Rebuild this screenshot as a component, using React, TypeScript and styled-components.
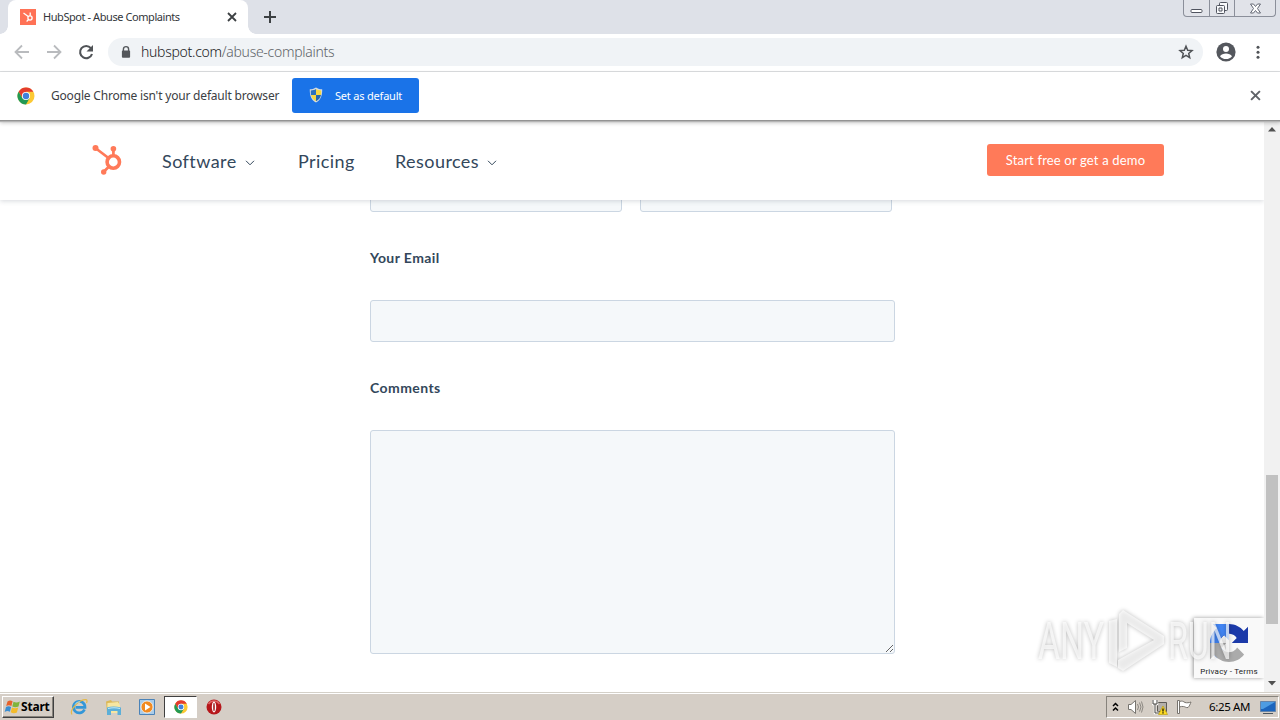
import React from "react";
import styled, { createGlobalStyle } from "styled-components";

const GlobalStyle = createGlobalStyle`
  * {
    box-sizing: border-box;
  }

  body {
    margin: 0;
    overflow: hidden;
    background: #fff;
  }

  svg {
    display: block;
    flex: none;
  }
`;

const Screen = styled.div`
  position: relative;
  display: flex;
  flex-direction: column;
  width: 1280px;
  height: 720px;
  overflow: hidden;
  font-family: "Noto Sans", "Open Sans", sans-serif;
`;

/* ---------- tabs ---------- */

const TabStrip = styled.div`
  display: flex;
  align-items: flex-start;
  height: 34px;
  padding-left: 8px;
  background: #dee1e8;
`;

const Tab = styled.div`
  position: relative;
  display: flex;
  align-items: center;
  width: 240px;
  height: 34px;
  padding: 0 11px 0 12px;
  border-radius: 8px 8px 0 0;
  background: #fff;

  &::before,
  &::after {
    content: "";
    position: absolute;
    bottom: 0;
    width: 8px;
    height: 8px;
  }

  &::before {
    left: -8px;
    background: radial-gradient(circle at 0 0, transparent 7.5px, #fff 8px);
  }

  &::after {
    right: -8px;
    background: radial-gradient(circle at 100% 0, transparent 7.5px, #fff 8px);
  }
`;

const TabTitle = styled.span`
  flex: 1;
  margin-left: 7px;
  color: #33363a;
  font-size: 11px;
  line-height: 16px;
  letter-spacing: -0.43px;
  white-space: nowrap;
`;

const NewTab = styled.div`
  margin: 11px 0 0 16px;
`;

const WindowButtons = styled.div`
  display: flex;
  width: 93px;
  height: 17px;
  margin: 0 4px 0 auto;
  border: 1px solid #8b8f9a;
  border-top: none;
  border-radius: 0 0 4px 4px;
  background: #e1e3e9;
`;

const WindowButton = styled.div<{ $width: number }>`
  display: flex;
  align-items: flex-end;
  justify-content: center;
  width: ${({ $width }) => $width}px;
  padding-bottom: 1px;

  & + & {
    border-left: 1px solid #8b8f9a;
  }
`;

/* ---------- toolbar ---------- */

const Toolbar = styled.div`
  display: flex;
  align-items: center;
  height: 38px;
  padding: 0 12px 1px 14px;
  border-bottom: 1px solid #dcdee0;
  background: #fff;
`;

const NavIcons = styled.div`
  display: flex;
  gap: 16px;
`;

const AddressBar = styled.div`
  display: flex;
  align-items: center;
  width: 1095px;
  height: 28px;
  margin-left: 14px;
  padding: 0 9px 0 11px;
  border-radius: 14px;
  background: #f0f3f6;
`;

const Url = styled.span`
  flex: 1;
  margin-left: 8px;
  color: #5f6368;
  font-size: 14px;
  font-weight: 300;
  letter-spacing: -0.29px;
  line-height: 20px;

  b {
    color: #202124;
    font-weight: inherit;
  }
`;

const ToolbarEnd = styled.div`
  display: flex;
  align-items: center;
  gap: 12px;
  margin-left: 13px;
`;

/* ---------- default browser bar ---------- */

const InfoBar = styled.div`
  position: relative;
  z-index: 3;
  display: flex;
  align-items: center;
  height: 49px;
  padding: 0 19px 2px 17px;
  background: #fff;
  box-shadow: inset 0 -1px #939393, 0 1px 1px #b5b5b5, 0 2px 4px rgba(0, 0, 0, 0.22);
`;

const InfoText = styled.span`
  margin-left: 16px;
  width: 241px;
  color: #3c4043;
  font-size: 12px;
  letter-spacing: -0.19px;
  white-space: nowrap;
`;

const DefaultButton = styled.button`
  display: flex;
  align-items: center;
  width: 127px;
  height: 35px;
  margin-right: auto;
  padding: 0 0 1px 16px;
  gap: 11px;
  border: none;
  border-radius: 3px;
  background: #1a73e8;
  color: #fff;
  font: 11px "Noto Sans", sans-serif;
  letter-spacing: -0.2px;
  white-space: nowrap;
`;

/* ---------- page ---------- */

const Viewport = styled.div`
  display: flex;
  height: 571px;
`;

const Page = styled.main`
  width: 1264px;
  overflow: hidden;
  background: #fff;
  color: #33475b;
  font-family: Lato, sans-serif;
`;

const SiteHeader = styled.header`
  position: relative;
  z-index: 2;
  display: flex;
  align-items: center;
  height: 79px;
  padding: 0 100px 0 91px;
  background: #fff;
  box-shadow: 0 1px 5px rgba(45, 62, 80, 0.2);
`;

const SiteNav = styled.nav`
  display: flex;
  margin-left: 38px;
`;

const NavLink = styled.a<{ $width: number }>`
  display: flex;
  align-items: center;
  gap: 9px;
  width: ${({ $width }) => $width}px;
  font-size: 18px;
  line-height: 24px;
  letter-spacing: 0.43px;

  svg {
    margin: 5px 0 0 -1px;
  }
`;

const DemoButton = styled.button`
  width: 177px;
  height: 32px;
  margin: 0 0 1px auto;
  padding: 0;
  border: none;
  border-radius: 3px;
  background: #ff7a59;
  color: #fff;
  font: 13px Lato, sans-serif;
  letter-spacing: 0.17px;
`;

const Form = styled.form`
  display: flex;
  flex-direction: column;
  width: 525px;
  margin: -30px 0 0 370px;
`;

const FieldRow = styled.div`
  display: flex;
  gap: 18px;
`;

const Input = styled.input`
  width: 100%;
  height: 42px;
  border: 1px solid #cbd6e2;
  border-radius: 3px;
  outline: none;
  background: #f5f8fa;

  ${FieldRow} & {
    width: 252px;
  }
`;

const Label = styled.label`
  margin: 37px 0 33px;
  font-size: 14px;
  font-weight: 700;
  line-height: 18px;
  letter-spacing: 0.42px;
`;

const TextArea = styled.textarea`
  width: 100%;
  height: 224px;
  border: 1px solid #cbd6e2;
  border-radius: 3px;
  outline: none;
  resize: vertical;
  background: #f5f8fa;
`;

const Scrollbar = styled.div`
  display: flex;
  flex-direction: column;
  align-items: center;
  width: 16px;
  padding: 6px 0;
  background: #f1f1f1;
`;

const ScrollThumb = styled.div`
  width: 12px;
  height: 149px;
  margin: 343px 0 auto;
  background: #c1c1c1;
`;

/* ---------- overlays ---------- */

const Recaptcha = styled.div`
  position: absolute;
  top: 618px;
  left: 1194px;
  z-index: 1;
  display: flex;
  flex-direction: column;
  align-items: center;
  width: 70px;
  height: 60px;
  padding-top: 6px;
  background: #f9f9f9;
  box-shadow: -1px 0 4px #999;
  clip-path: inset(-6px 0 -6px -6px);
  color: #222;
  font: 8px Roboto, sans-serif;
  letter-spacing: 0.22px;
  white-space: nowrap;
`;

const RecaptchaLinks = styled.span`
  margin-top: 5px;
`;

const Watermark = styled.svg`
  position: absolute;
  top: 602px;
  left: 1028px;
  z-index: 4;
  filter: drop-shadow(0 0 2px rgba(0, 0, 0, 0.38));
`;

/* ---------- taskbar ---------- */

const Taskbar = styled.footer`
  position: relative;
  z-index: 3;
  display: flex;
  align-items: center;
  height: 28px;
  padding: 1px 1px 0 2px;
  border-top: 1px solid #d4d0c8;
  background: #d5cec6;
  box-shadow: inset 0 1px #fff;
`;

const StartButton = styled.button`
  display: flex;
  align-items: center;
  gap: 0;
  width: 52px;
  height: 22px;
  padding: 0 0 1px 1px;
  border: 1px solid;
  border-color: #fff #404040 #404040 #fff;
  background: #d5cec6;
  box-shadow: inset -1px -1px #87837c;
  color: #000;
  font: bold 12px "Noto Sans", sans-serif;
  letter-spacing: -0.2px;
`;

const QuickLaunch = styled.div`
  display: flex;
  align-items: center;
  margin-left: 8px;
`;

const TaskItem = styled.div<{ $active?: boolean }>`
  display: flex;
  align-items: center;
  justify-content: center;
  width: ${({ $active }) => ($active ? 33 : 34)}px;
  height: 22px;
  border: 1px solid;
  border-color: ${({ $active }) => ($active ? "#404040 #fff #fff #404040" : "transparent")};
  background: ${({ $active }) => ($active ? "#fff" : "none")};
`;

const Tray = styled.div`
  display: flex;
  align-items: center;
  width: 173px;
  height: 22px;
  margin-left: auto;
  padding-left: 5px;
  border: 1px solid;
  border-color: #87837c #fff #fff #87837c;
`;

const TrayIcons = styled.div`
  display: flex;
  align-items: center;
  gap: 8px;
`;

const Clock = styled.span`
  width: 51px;
  margin: -2px 0 0 16px;
  color: #000;
  font-size: 11.5px;
  letter-spacing: -0.35px;
  white-space: nowrap;
`;

/* ---------- icons ---------- */

const Sprocket = ({ size, color }: { size: number; color: string }) => (
  <svg width={size} height={size} viewBox="0 0 33 33" fill="none" stroke={color}>
    <circle cx="22.3" cy="18" r="6.2" strokeWidth="3.6" />
    <path d="M5 4.500 17.500 14M22.400 5v7M17.800 22.700 13.500 27" strokeWidth="2.700" />
    <g fill={color} stroke="none">
      <circle cx="4.500" cy="4" r="3" />
      <circle cx="22.400" cy="4.800" r="2.800" />
      <circle cx="12.700" cy="28" r="2.700" />
    </g>
  </svg>
);

const Favicon = () => (
  <svg width="16" height="16" viewBox="0 0 16 16">
    <path fill="#ff7256" d="M0 0h16v16H0z" />
    <g fill="none" stroke="#fff" strokeWidth="1.3">
      <circle cx="10" cy="9" r="2.100" />
      <path d="M3.500 4 8.200 7.500M10.200 3.500v3.200M8.400 10.800l-1.800 1.700" />
    </g>
  </svg>
);

const Cross = ({ size, color = "#5f6368" }: { size: number; color?: string }) => (
  <svg width={size} height={size} viewBox="0 0 10 10" stroke={color} strokeWidth="1.800">
    <path d="m1 1 8 8M9 1 1 9" />
  </svg>
);

const Plus = () => (
  <svg width="12" height="12" viewBox="0 0 12 12" stroke="#3c4043" strokeWidth="2">
    <path d="M6 0v12M0 6h12" />
  </svg>
);

const Arrow = ({ flipped }: { flipped?: boolean }) => (
  <svg width="16" height="16" viewBox="0 0 16 16" fill="none" stroke="#b9bbbe" strokeWidth="1.800">
    <path d={flipped ? "M1 8h13M8 1.500 14.500 8 8 14.500" : "M15 8H2M8 1.500 1.500 8 8 14.500"} />
  </svg>
);

const Reload = () => (
  <svg width="16" height="16" viewBox="0 0 16 16">
    <path d="M12.900 4.200A6.100 6.100 0 1 0 14 10" fill="none" stroke="#505357" strokeWidth="2.100" />
    <path d="M15 1v6.500H8.500z" fill="#505357" />
  </svg>
);

const Lock = () => (
  <svg width="14" height="14" viewBox="0 0 14 14">
    <path d="M4.400 6V4.200a2.600 2.600 0 0 1 5.200 0V6" fill="none" stroke="#54575b" strokeWidth="1.400" />
    <rect x="2.900" y="5.400" width="8.200" height="7.400" rx="1" fill="#54575b" />
  </svg>
);

const Star = () => (
  <svg width="16" height="16" viewBox="0 0 16 16" fill="none" stroke="#505357" strokeWidth="1.500">
    <path d="m8 2.200 1.700 4 4.300.4-3.300 2.800 1 4.200L8 11.400l-3.700 2.200 1-4.200L2 6.600l4.300-.4z" />
  </svg>
);

const Avatar = () => (
  <svg width="20" height="20" viewBox="0 0 20 20">
    <circle cx="10" cy="10" r="9.600" fill="#54575d" />
    <circle cx="10" cy="6.900" r="3" fill="#fff" />
    <path d="M4 14.200c1.200-2 3.500-2.800 6-2.800s4.800.8 6 2.800c-1.300 1.800-3.500 2.900-6 2.900s-4.700-1.100-6-2.900z" fill="#fff" />
  </svg>
);

const Dots = () => (
  <svg width="20" height="16" viewBox="0 0 20 16" fill="#505357">
    <circle cx="10" cy="3.200" r="1.500" />
    <circle cx="10" cy="8.200" r="1.500" />
    <circle cx="10" cy="13.200" r="1.500" />
  </svg>
);

const ChromeLogo = ({ size }: { size: number }) => (
  <svg width={size} height={size} viewBox="0 0 18 18">
    <circle cx="9" cy="9" r="8.500" fill="#fcc934" />
    <path d="M1.600 4.750A8.500 8.500 0 0 1 16.400 4.750H9L5.300 11.100z" fill="#e33b2e" />
    <path d="M1.600 4.750A8.500 8.500 0 0 0 9 17.500l3.700-6.400H5.300z" fill="#229954" />
    <circle cx="9" cy="9" r="4.100" fill="#fff" />
    <circle cx="9" cy="9" r="3.200" fill="#3f80dc" />
  </svg>
);

const Shield = () => (
  <svg width="16" height="16" viewBox="0 0 16 16">
    <path d="M8 .5c2 1.300 4 1.800 6.200 1.800C14.400 8 13 13 8 15.500 3 13 1.600 8 1.800 2.300 4 2.300 6 1.800 8 .5z" fill="#d5dce2" />
    <path d="M8 2v6H3C2.800 6.500 2.700 5 2.800 3.400 4.700 3.400 6.500 3 8 2z" fill="#2a71bd" />
    <path d="M8 2v6h5c.2-1.500.3-3 .2-4.600C11.300 3.400 9.500 3 8 2zM8 8v6.300C5.200 12.900 3.700 10.800 3 8z" fill="#f5d742" />
    <path d="M8 8v6.300c2.800-1.400 4.300-3.500 5-6.300z" fill="#2467ad" />
  </svg>
);

const Chevron = () => (
  <svg width="10" height="6" viewBox="0 0 10 6" fill="none" stroke="#33475b">
    <path d="m1 .8 4 4 4-4" />
  </svg>
);

const ScrollArrow = ({ down }: { down?: boolean }) => (
  <svg width="8" height="5" viewBox="0 0 8 5" fill="#505050">
    <path d={down ? "M0 0h8L4 4.500z" : "M0 4.500h8L4 0z"} />
  </svg>
);

const RecaptchaLogo = () => (
  <svg width="38" height="38" viewBox="0 0 64 64">
    <path
      d="M64 31.955l-.033-1.370V4.687l-7.160 7.160C50.948 4.674 42.033.093 32.050.093c-10.400 0-19.622 4.960-25.458 12.640l11.736 11.860a15.550 15.550 0 0 1 4.754-5.334c2.050-1.600 4.952-2.906 8.968-2.906.485 0 .860.057 1.135.163 4.976.393 9.288 3.140 11.828 7.124l-8.307 8.307z"
      fill="#1c3aa9"
    />
    <path
      d="M31.862.094l-1.370.033H4.594l7.160 7.160C4.580 13.147 0 22.060 0 32.046c0 10.400 4.960 19.622 12.640 25.458L24.500 45.768a15.550 15.550 0 0 1-5.334-4.754c-1.600-2.050-2.906-4.952-2.906-8.968 0-.485.057-.860.163-1.135.393-4.976 3.140-9.288 7.124-11.828l8.307 8.307z"
      fill="#4285f4"
    />
    <path
      d="M.001 32.045l.033 1.370v25.898l7.160-7.160c5.860 7.173 14.774 11.754 24.760 11.754 10.400 0 19.622-4.960 25.458-12.640l-11.736-11.860a15.550 15.550 0 0 1-4.754 5.334c-2.050 1.600-4.952 2.906-8.968 2.906-.485 0-.860-.057-1.135-.163-4.976-.393-9.288-3.140-11.828-7.124l8.307-8.307z"
      fill="#ababab"
    />
  </svg>
);

const WindowsFlag = () => (
  <svg width="17" height="16" viewBox="0 0 17 16">
    <path d="M3.500 2.500C5.500 1 7 1.300 8.600 2.200L7.400 7C5.800 6 4 6 2.200 7z" fill="#e7622b" />
    <path d="M9.500 2.700c2 1.100 4 1 6.300-.2l-1.300 5c-2.200 1-4.200 1-6.200 0z" fill="#7fb43b" />
    <path d="M2 8c1.700-1 3.500-1 5.100 0l-1.200 4.800c-1.700-1-3.400-1-5.200.1z" fill="#3a8ed2" />
    <path d="M8 8.500c2 1 4 1 6.200 0l-1.300 5c-2.200 1-4.200.9-6.200-.2z" fill="#f3bb2b" />
  </svg>
);

const InternetExplorer = () => (
  <svg width="18" height="18" viewBox="0 0 18 18" fill="none">
    <path d="M14.500 11.500A5.800 5.800 0 1 1 15 9.300H5.500" stroke="#3397d8" strokeWidth="2.700" />
    <path d="M2 16.500C-1 12 9 1.500 16 1.700c1.400.2 1.200 2 .5 3.300" stroke="#e5b946" strokeWidth="1.200" />
    <path d="M5 6.500C6 4.500 8 3.800 10 4" stroke="#a4daf5" />
  </svg>
);

const Explorer = () => (
  <svg width="17" height="17" viewBox="0 0 17 17">
    <path d="M1 2.500 6 1l1 1.500h7V14H2z" fill="#dcb857" />
    <path d="M2.500 4 13 3l2 3v8H2z" fill="#f7e6a1" />
    <path d="M2 8.500c4-1.300 9-1.300 14 0V16h-3.500v-4H6v4H2z" fill="#5cafd8" />
    <path d="M3 9.500c4-1 8-1 12 0" stroke="#c4eafa" fill="none" />
  </svg>
);

const MediaPlayer = () => (
  <svg width="16" height="16" viewBox="0 0 16 16">
    <path d="M.5.500h15v15H.5z" fill="#a9cce9" stroke="#4b83b8" />
    <circle cx="8" cy="8" r="6" fill="#f18a20" stroke="#fff" strokeWidth=".7" />
    <path d="m6 4.500 5.500 3.500L6 11.500z" fill="#fff" />
  </svg>
);

const Opera = () => (
  <svg width="16" height="16" viewBox="0 0 16 16">
    <circle cx="8" cy="8" r="7.500" fill="#b6171b" />
    <path d="M2.500 5a6.500 6.500 0 0 1 11 0" stroke="#df6565" strokeWidth="1.500" fill="none" />
    <ellipse cx="8" cy="8" rx="2.200" ry="5.400" fill="#fff" />
    <ellipse cx="8" cy="8" rx=".8" ry="4.300" fill="#9d1115" />
  </svg>
);

const TrayChevron = () => (
  <svg width="7" height="10" viewBox="0 0 7 10" fill="none" stroke="#000" strokeWidth="1.500">
    <path d="m1 4 2.500-2.500L6 4M1 8.500 3.500 6 6 8.500" />
  </svg>
);

const Speaker = () => (
  <svg width="17" height="16" viewBox="0 0 17 16" fill="none" stroke="#77746f">
    <path d="M1.500 5.500H4L8.500 1.500v13L4 10.500H1.500z" fill="#fff" />
    <path d="M10.500 5q2 3 0 6M12.500 3.500q3 4.500 0 9M14.500 2.500q3 5.500 0 11" stroke="#8b8781" />
  </svg>
);

const Network = () => (
  <svg width="16" height="16" viewBox="0 0 16 16">
    <path d="M5.500 3.500h9v9h-9z" fill="#b4b0aa" stroke="#5c5955" />
    <path d="M1 1v4h4V1M3 1v4M3 5v9h4" fill="none" stroke="#fff" strokeWidth="2.400" />
    <path d="M1 1v4h4V1M3 5v9h4" fill="none" stroke="#464440" />
    <path d="m11 7 4.500 8.500h-9z" fill="#fddb23" stroke="#b99800" strokeWidth=".6" />
    <path d="M11 9.500v3M11 13.200v1.200" stroke="#000" strokeWidth="1.200" />
  </svg>
);

const Flag = () => (
  <svg width="17" height="16" viewBox="0 0 17 16" fill="#fff" stroke="#77736d">
    <path d="M1.500 1.500h2v13h-2z" />
    <path d="M3.500 2.500c2.500-1 4 0 5.500 1 2 .5 4 .3 6-.5-1 2.500-1.500 4-3 5.500-2 .5-3-1-4.500-1-1.500-.3-2.500 0-4 .5z" />
  </svg>
);

const Desktop = () => (
  <svg width="16" height="13" viewBox="0 0 16 13">
    <path d="M.5.500h15v10H.5z" fill="#1c65bd" stroke="#6584a9" />
    <path d="M1 1h14L3 8H1z" fill="#4e9ce2" />
    <path d="M3 12.500h10" stroke="#4c565f" />
  </svg>
);

const App = () => {
  return (
    <>
      <GlobalStyle />
      <Screen>
        <TabStrip>
          <Tab>
            <Favicon />
            <TabTitle>HubSpot - Abuse Complaints</TabTitle>
            <Cross size={10} color="#3c4043" />
          </Tab>
          <NewTab>
            <Plus />
          </NewTab>
          <WindowButtons>
            <WindowButton $width={25}>
              <svg width="13" height="7" viewBox="0 0 13 7" fill="#fff" stroke="#50545f">
                <rect x="1" y="1.500" width="11" height="3" rx="1" />
              </svg>
            </WindowButton>
            <WindowButton $width={25}>
              <svg width="14" height="14" viewBox="0 0 14 14" fill="#f8f9fb" stroke="#50545f">
                <rect x="4.500" y="1.500" width="8" height="8" rx="1" />
                <rect x="1.500" y="4.500" width="8" height="8" rx="1" />
                <path d="M4 7h3v3H4z" />
              </svg>
            </WindowButton>
            <WindowButton $width={41}>
              <svg width="13" height="13" viewBox="0 0 13 13" fill="#fff" stroke="#656975">
                <path d="M1.500 2h3l2 2.500 2-2.500h3L8.500 6.500 11.500 11h-3l-2-2.500-2 2.500h-3l3-4.500z" />
              </svg>
            </WindowButton>
          </WindowButtons>
        </TabStrip>

        <Toolbar>
          <NavIcons>
            <Arrow />
            <Arrow flipped />
            <Reload />
          </NavIcons>
          <AddressBar>
            <Lock />
            <Url>
              <b>hubspot.com</b>/abuse-complaints
            </Url>
            <Star />
          </AddressBar>
          <ToolbarEnd>
            <Avatar />
            <Dots />
          </ToolbarEnd>
        </Toolbar>

        <InfoBar>
          <ChromeLogo size={18} />
          <InfoText>Google Chrome isn't your default browser</InfoText>
          <DefaultButton>
            <Shield />
            Set as default
          </DefaultButton>
          <Cross size={11} />
        </InfoBar>

        <Viewport>
          <Page>
            <SiteHeader>
              <Sprocket size={33} color="#ff7a59" />
              <SiteNav>
                <NavLink $width={136}>
                  Software <Chevron />
                </NavLink>
                <NavLink $width={97}>Pricing</NavLink>
                <NavLink $width={110}>
                  Resources <Chevron />
                </NavLink>
              </SiteNav>
              <DemoButton>Start free or get a demo</DemoButton>
            </SiteHeader>
            <Form>
              <FieldRow>
                <Input aria-label="First name" />
                <Input aria-label="Last name" />
              </FieldRow>
              <Label htmlFor="email">Your Email</Label>
              <Input id="email" />
              <Label htmlFor="comments">Comments</Label>
              <TextArea id="comments" />
            </Form>
          </Page>
          <Scrollbar>
            <ScrollArrow />
            <ScrollThumb />
            <ScrollArrow down />
          </Scrollbar>
        </Viewport>

        <Taskbar>
          <StartButton>
            <WindowsFlag />
            Start
          </StartButton>
          <QuickLaunch>
            <TaskItem>
              <InternetExplorer />
            </TaskItem>
            <TaskItem>
              <Explorer />
            </TaskItem>
            <TaskItem>
              <MediaPlayer />
            </TaskItem>
            <TaskItem $active>
              <ChromeLogo size={14} />
            </TaskItem>
            <TaskItem>
              <Opera />
            </TaskItem>
          </QuickLaunch>
          <Tray>
            <TrayIcons>
              <TrayChevron />
              <Speaker />
              <Network />
              <Flag />
            </TrayIcons>
            <Clock>6:25 AM</Clock>
            <Desktop />
          </Tray>
        </Taskbar>

        <Recaptcha>
          <RecaptchaLogo />
          <RecaptchaLinks>Privacy - Terms</RecaptchaLinks>
        </Recaptcha>

        <Watermark
          width="236"
          height="84"
          viewBox="0 0 236 84"
          fill="#fff"
          fillOpacity=".68"
          fontFamily="Roboto"
          fontSize="52"
        >
          <text transform="translate(10 57) scale(.65 1)">ANY</text>
          <path
            d="M81 19l8-2v48l-8-4zM91 12l4-4 41 26v8L95 69l-5-3v-8l36-20-27-17v25l-8 4z"
            fillRule="evenodd"
          />
          <text transform="translate(140 57) scale(.62 1)">RUN</text>
        </Watermark>
      </Screen>
    </>
  );
};

export default App;
